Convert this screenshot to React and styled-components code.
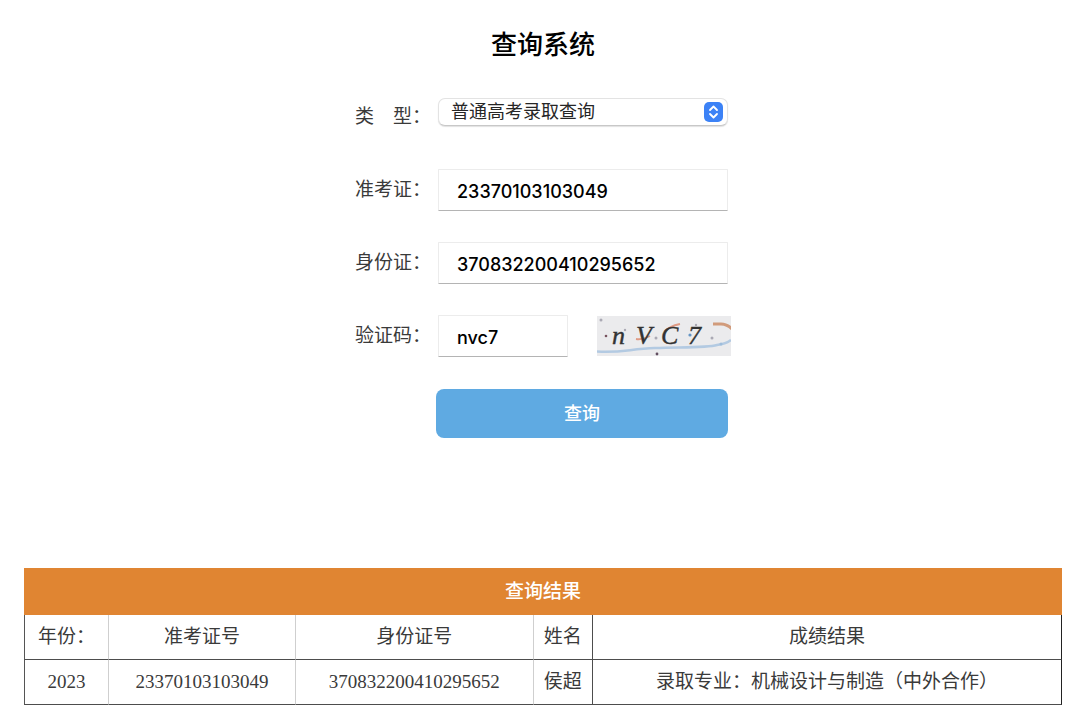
import React from "react";
import styled, { createGlobalStyle } from "styled-components";

const serif = `"Liberation Serif", "Noto Sans CJK SC", serif`;
const sans = `Inter, "Noto Sans CJK SC", sans-serif`;

const GlobalStyle = createGlobalStyle`
  * { box-sizing: border-box; }
  body { margin: 0; background: #fff; color: #3a3a3a; font-family: ${serif}; }
`;

const Page = styled.main`
  padding: 26px 18px 20px 24px;
`;

const Title = styled.h1`
  margin: 0 0 30px;
  font-size: 26px;
  line-height: 40px;
  font-weight: 500;
  text-align: center;
  color: #000;
`;

const Form = styled.form`
  display: flex;
  flex-direction: column;
  gap: 31px;
  max-width: 376px;
  margin: 0 auto 130px;
`;

const Row = styled.div`
  display: grid;
  grid-template-columns: 83px 1fr;
`;

const Label = styled.label`
  font-size: 19px;
  line-height: 42px;
  white-space: pre;
`;

const Field = styled.div`
  display: flex;
  align-items: center;
  gap: 29px;
  height: 42px;
  padding-right: ${(p) => (p.$wide ? "0" : "3px")};
`;

const SelectBox = styled.div`
  position: relative;
  flex: 1;
  align-self: flex-start;
  margin-top: 2px;
`;

const Select = styled.select`
  display: block;
  appearance: none;
  width: 100%;
  height: 28px;
  padding: 0 32px 0 12px;
  border: 1px solid #e3e3e3;
  border-bottom-color: #c8c8c8;
  border-radius: 7px;
  background: #fff;
  box-shadow: 0 1px 1px rgba(0, 0, 0, 0.12);
  color: #262626;
  font-family: ${sans};
  font-size: 18px;
  line-height: 26px;
`;

const SelectArrows = styled.svg`
  position: absolute;
  top: 4px;
  right: 5px;
  pointer-events: none;
`;

const Input = styled.input`
  width: ${(p) => (p.$short ? "130px" : "100%")};
  height: 42px;
  padding: 3px 18px 0;
  border: 1px solid #ececec;
  border-bottom-color: #b4b4b4;
  border-radius: 1px;
  background: #fff;
  color: #000;
  font-family: ${sans};
  font-size: 18px;
  font-weight: 500;
  outline: none;
`;

const CaptchaImage = styled.svg`
  flex: none;
  background: #ebebed;
`;

const Submit = styled.button`
  width: 292px;
  height: 49px;
  margin: 1px 3px 0 0;
  padding: 0 0 3px;
  align-self: flex-end;
  border: 0;
  border-radius: 8px;
  background: #5faae2;
  color: #fff;
  font-family: ${sans};
  font-size: 18px;
  font-weight: 500;
`;

const ResultTable = styled.table`
  width: 100%;
  table-layout: fixed;
  border-collapse: separate;
  border-spacing: 0;
  font-size: 19px;
  line-height: 24px;
  text-align: center;
`;

const Col = styled.col`
  width: ${(p) => p.$width};
`;

const Banner = styled.th`
  height: 47px;
  padding: 0;
  background: #e08532;
  color: #fff;
  font-weight: 500;
`;

const Cell = styled.td`
  height: 45px;
  padding: 0;
  font-weight: 400;
  white-space: nowrap;
  border-bottom: 1px solid #4d4d4d;
  border-right: 1px solid ${(p) => (p.$dark ? "#4d4d4d" : "#cfcfcf")};

  &:first-child { border-left: 1px solid #555; }
  &:last-child { border-right: 1px solid #222; }
`;

const columns = [
  { title: "年份：", value: "2023", width: "8.2%" },
  { title: "准考证号", value: "23370103103049", width: "18%" },
  { title: "身份证号", value: "370832200410295652", width: "22.9%" },
  { title: "姓名", value: "侯超", width: "5.7%", dark: true },
  { title: "成绩结果", value: "录取专业：机械设计与制造（中外合作）", width: "45.2%" },
];

function Captcha() {
  return (
    <CaptchaImage width="134" height="40" viewBox="0 0 134 40" role="img" aria-label="验证码">
      <g fill="none">
        <path d="M39 23q7 1 14-3M68 16q4-6 15-8" stroke="#df9a84" strokeWidth="2" />
        <path d="M116 8h8q6 0 11 5" stroke="#d19b7b" strokeWidth="3" />
        <path d="M0 35.500C25 37 32 33 58 32C84 31 110 32 120 29Q129 28 134 24" stroke="#b3cae2" strokeWidth="2.500" />
      </g>
      <g fontFamily="Liberation Serif, serif" fontSize="26" fontStyle="italic" fill="#333" stroke="#333" strokeWidth="0.400">
        <text x="15" y="28">n</text>
        <text x="39" y="28">V</text>
        <text x="64" y="28">C</text>
        <text x="91" y="28">7</text>
      </g>
      <g fill="#aaa9b4">
        <circle cx="4" cy="4" r="1.500" />
        <circle cx="28" cy="14" r="1.200" />
        <circle cx="59" cy="22" r="1.500" />
        <circle cx="99" cy="9" r="1.200" />
        <circle cx="115" cy="22" r="1.500" />
        <circle cx="124" cy="28" r="1.500" fill="#9ebddb" />
        <circle cx="9" cy="20" r="1.300" fill="#77535e" />
        <circle cx="60" cy="38" r="1.400" fill="#624e60" />
        <circle cx="93" cy="19" r="1.600" fill="#6495c5" />
      </g>
    </CaptchaImage>
  );
}

export default function App() {
  return (
    <>
      <GlobalStyle />
      <Page>
        <Title>查询系统</Title>
        <Form onSubmit={(e) => e.preventDefault()}>
          <Row>
            <Label htmlFor="type">类　型：</Label>
            <Field>
              <SelectBox>
                <Select id="type">
                  <option>普通高考录取查询</option>
                </Select>
                <SelectArrows width="19" height="20" viewBox="0 0 19 20" aria-hidden="true">
                  <rect width="19" height="20" rx="5" fill="#3c82f6" />
                  <path
                    d="M6 8L9.500 4.500L13 8M6 12l3.500 3.500L13 12"
                    fill="none"
                    stroke="#fff"
                    strokeWidth="1.800"
                    strokeLinecap="round"
                    strokeLinejoin="round"
                  />
                </SelectArrows>
              </SelectBox>
            </Field>
          </Row>
          <Row>
            <Label htmlFor="ticket">准考证：</Label>
            <Field>
              <Input id="ticket" defaultValue="23370103103049" />
            </Field>
          </Row>
          <Row>
            <Label htmlFor="identity">身份证：</Label>
            <Field>
              <Input id="identity" defaultValue="370832200410295652" />
            </Field>
          </Row>
          <Row>
            <Label htmlFor="code">验证码：</Label>
            <Field $wide>
              <Input id="code" $short defaultValue="nvc7" />
              <Captcha />
            </Field>
          </Row>
          <Submit type="submit">查询</Submit>
        </Form>
        <ResultTable>
          <colgroup>
            {columns.map((c) => (
              <Col key={c.title} $width={c.width} />
            ))}
          </colgroup>
          <thead>
            <tr>
              <Banner colSpan={5}>查询结果</Banner>
            </tr>
            <tr>
              {columns.map((c) => (
                <Cell as="th" scope="col" key={c.title} $dark={c.dark}>{c.title}</Cell>
              ))}
            </tr>
          </thead>
          <tbody>
            <tr>
              {columns.map((c) => (
                <Cell key={c.title} $dark={c.dark}>{c.value}</Cell>
              ))}
            </tr>
          </tbody>
        </ResultTable>
      </Page>
    </>
  );
}
